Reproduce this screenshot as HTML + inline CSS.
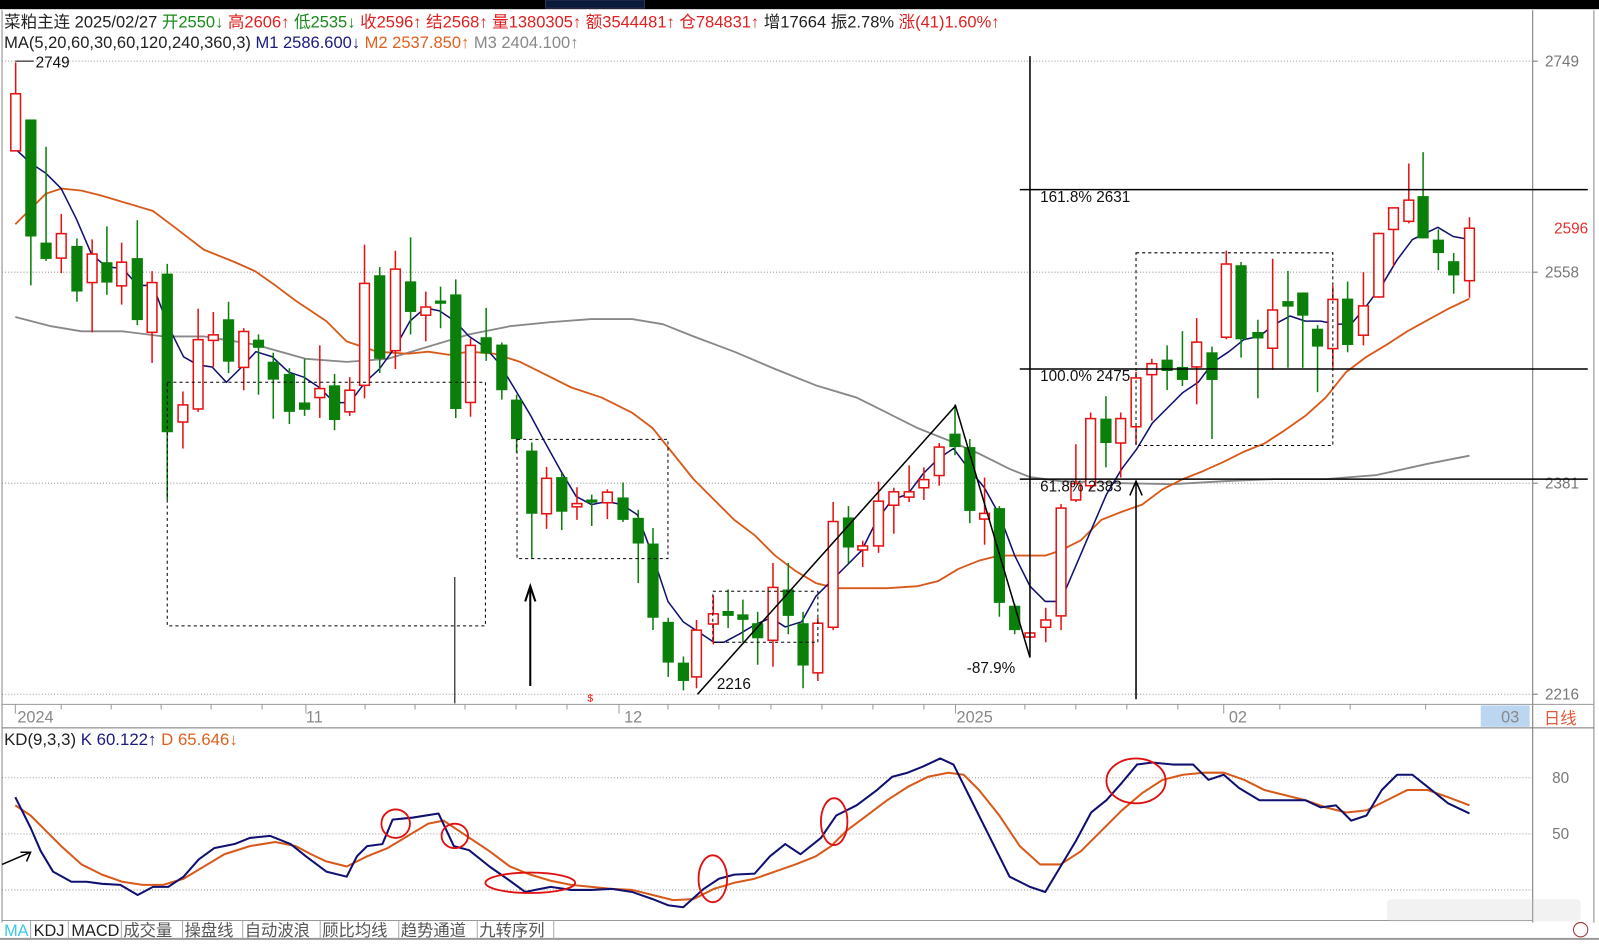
<!DOCTYPE html>
<html><head><meta charset="utf-8"><style>
html,body{margin:0;padding:0;background:#fff;width:1599px;height:946px;overflow:hidden}
svg{display:block}
text{font-family:"Liberation Sans","Noto Sans CJK SC",sans-serif}
</style></head><body>
<svg id="s" width="1599" height="946" viewBox="0 0 1568 928" preserveAspectRatio="none" xmlns="http://www.w3.org/2000/svg">
<rect x="0" y="0" width="1568" height="928" fill="#fff"/>
<rect x="0" y="0" width="1568" height="9" fill="#000"/>
<rect x="535" y="0" width="97" height="8" fill="#0a1a3a" stroke="#335" />
<line x1="2" y1="10" x2="2" y2="905" stroke="#888"/>
<line x1="1503" y1="10" x2="1503" y2="905" stroke="#777"/>
<line x1="1563" y1="10" x2="1563" y2="905" stroke="#888"/>
<line x1="2" y1="691" x2="1563" y2="691" stroke="#999"/>
<line x1="2" y1="714" x2="1563" y2="714" stroke="#777"/>
<line x1="2" y1="903" x2="1503" y2="903" stroke="#999"/>
<line x1="0" y1="921" x2="1568" y2="921" stroke="#999" stroke-width="2"/>
<g stroke="#999" stroke-dasharray="1,2">
<line x1="2" y1="60" x2="1503" y2="60"/><line x1="2" y1="267" x2="1503" y2="267"/>
<line x1="2" y1="474" x2="1503" y2="474"/><line x1="2" y1="681" x2="1503" y2="681"/>
<line x1="2" y1="763" x2="1503" y2="763"/><line x1="2" y1="818" x2="1503" y2="818"/>
<line x1="2" y1="873" x2="1503" y2="873"/>
</g>
<g stroke="#777"><line x1="1503" y1="60" x2="1508" y2="60"/><line x1="1503" y1="267" x2="1508" y2="267"/><line x1="1503" y1="474" x2="1508" y2="474"/><line x1="1503" y1="681" x2="1508" y2="681"/></g>
<g font-size="15" fill="#777">
<text x="1515" y="65">2749</text><text x="1515" y="272">2558</text><text x="1515" y="479">2381</text><text x="1515" y="686">2216</text>
<text x="1522" y="768">80</text><text x="1522" y="823">50</text>
</g>
<text x="1524" y="229" font-size="15" fill="#e03030">2596</text>
<g stroke="#999"><line x1="15" y1="691" x2="15" y2="700"/><line x1="60" y1="691" x2="60" y2="696"/><line x1="109" y1="691" x2="109" y2="696"/><line x1="158" y1="691" x2="158" y2="696"/><line x1="207" y1="691" x2="207" y2="696"/><line x1="257" y1="691" x2="257" y2="696"/><line x1="300" y1="691" x2="300" y2="700"/><line x1="358" y1="691" x2="358" y2="696"/><line x1="407" y1="691" x2="407" y2="696"/><line x1="456" y1="691" x2="456" y2="696"/><line x1="506" y1="691" x2="506" y2="696"/><line x1="556" y1="691" x2="556" y2="696"/><line x1="607" y1="691" x2="607" y2="700"/><line x1="655" y1="691" x2="655" y2="696"/><line x1="705" y1="691" x2="705" y2="696"/><line x1="756" y1="691" x2="756" y2="696"/><line x1="806" y1="691" x2="806" y2="696"/><line x1="856" y1="691" x2="856" y2="696"/><line x1="906" y1="691" x2="906" y2="696"/><line x1="937" y1="691" x2="937" y2="700"/><line x1="1005" y1="691" x2="1005" y2="696"/><line x1="1055" y1="691" x2="1055" y2="696"/><line x1="1105" y1="691" x2="1105" y2="696"/><line x1="1155" y1="691" x2="1155" y2="696"/><line x1="1200" y1="691" x2="1200" y2="700"/><line x1="1255" y1="691" x2="1255" y2="696"/><line x1="1324" y1="691" x2="1324" y2="696"/><line x1="1398" y1="691" x2="1398" y2="696"/></g>
<rect x="1452" y="692" width="48" height="21" fill="#bcd6f2"/>
<g font-size="16" fill="#888"><text x="17" y="709">2024</text><text x="300" y="709">11</text><text x="612" y="709">12</text><text x="938" y="709">2025</text><text x="1205" y="709">02</text><text x="1472" y="709">03</text></g>
<text x="1514" y="710" font-size="16" fill="#e05a3a">日线</text>

<g id="ma"></g>
<g id="candles"></g>

<g stroke="#000" fill="none">
<line x1="15" y1="60" x2="33" y2="60" stroke-width="1"/>
<line x1="1010" y1="55" x2="1010" y2="645" stroke-width="1.5"/>
<line x1="1000" y1="186" x2="1557" y2="186" stroke-width="1.5"/>
<line x1="1000" y1="362" x2="1557" y2="362" stroke-width="1.5"/>
<line x1="1000" y1="470" x2="1557" y2="470" stroke-width="1.5"/>
<line x1="1114" y1="472" x2="1114" y2="686" stroke-width="1.5"/>
<polyline points="1108,486 1114,472 1120,486" stroke-width="1.5"/>
<polyline points="684,681 937,398 1010,645" stroke-width="1.5"/>
<line x1="446" y1="566" x2="446" y2="690"/>
<line x1="520" y1="575" x2="520" y2="673" stroke-width="2"/>
<polyline points="515,590 520,575 525,590" stroke-width="2"/>
<g stroke-dasharray="3,3">
<rect x="164" y="375" width="312" height="239"/>
<rect x="507" y="431" width="148" height="117"/>
<rect x="699" y="580" width="103" height="50"/>
<rect x="1114" y="248" width="193" height="189"/>
</g>
<line x1="2" y1="848" x2="30" y2="836" stroke-width="1.5"/>
<polyline points="20,836 30,836 26,845" stroke-width="1.5"/>
</g>
<g font-size="15" fill="#111">
<text x="35" y="66">2749</text>
<text x="703" y="676">2216</text>
<text x="948" y="660">-87.9%</text>
<text x="1020" y="198">161.8% 2631</text>
<text x="1020" y="374">100.0% 2475</text>
<text x="1020" y="482">61.8% 2383</text>
</g>
<text x="576" y="688" font-size="10" fill="#e00">$</text>

<text x="4" y="27" fill="#222" font-size="16.2">菜粕主连 2025/02/27 <tspan fill="#1a8a1a">开2550↓</tspan> <tspan fill="#e02020">高2606↑</tspan> <tspan fill="#1a8a1a">低2535↓</tspan> <tspan fill="#e02020">收2596↑ 结2568↑ 量1380305↑ 额3544481↑ 仓784831↑</tspan> 增17664 振2.78% <tspan fill="#e02020">涨(41)1.60%↑</tspan></text>
<text x="4" y="47" fill="#222" font-size="16.2">MA(5,20,60,30,60,120,240,360,3)  <tspan fill="#1a1a80">M1 2586.600↓</tspan>  <tspan fill="#e06020">M2 2537.850↑</tspan>  <tspan fill="#888">M3 2404.100↑</tspan></text>
<text x="4" y="731" fill="#222" font-size="16.5">KD(9,3,3)  <tspan fill="#1a1a80">K 60.122↑</tspan>  <tspan fill="#e06020">D 65.646↓</tspan></text>
<g id="kd"></g>
<g stroke="#e01010" stroke-width="1.8" fill="none">
<ellipse cx="388" cy="808" rx="14" ry="14"/>
<ellipse cx="446" cy="820" rx="13" ry="12"/>
<ellipse cx="520" cy="866" rx="44" ry="10"/>
<ellipse cx="699" cy="862" rx="14" ry="23"/>
<ellipse cx="818" cy="806" rx="13" ry="23"/>
<ellipse cx="1114" cy="766" rx="29" ry="22"/>
</g>
<g font-size="16" fill="#222">
<text x="4" y="918" fill="#3cc8e8">MA</text>
<text x="33" y="918">KDJ</text><text x="70" y="918">MACD</text>
<text x="121" y="918" fill="#555">成交量</text><text x="181" y="918" fill="#555">操盘线</text><text x="240" y="918" fill="#555">自动波浪</text><text x="316" y="918" fill="#555">顾比均线</text><text x="393" y="918" fill="#555">趋势通道</text><text x="470" y="918" fill="#555">九转序列</text>
</g>
<g stroke="#aaa"><line x1="30" y1="903" x2="30" y2="921"/><line x1="67" y1="903" x2="67" y2="921"/><line x1="119" y1="903" x2="119" y2="921"/><line x1="179" y1="903" x2="179" y2="921"/><line x1="238" y1="903" x2="238" y2="921"/><line x1="314" y1="903" x2="314" y2="921"/><line x1="391" y1="903" x2="391" y2="921"/><line x1="468" y1="903" x2="468" y2="921"/><line x1="543" y1="903" x2="543" y2="921"/></g>
<g opacity="0.25" fill="#ccc"><rect x="1360" y="882" width="190" height="22" rx="4"/></g>
<circle cx="1550" cy="912" r="7" fill="none" stroke="#933"/>
</svg>
<script>
var NS="http://www.w3.org/2000/svg";
function el(p,t,a){var e=document.createElementNS(NS,t);for(var k in a)e.setAttribute(k,a[k]);p.appendChild(e);return e;}
var A=[[35,105,245,28,245,'r'],[69,168,455,168,575,'g'],[103,470,510,235,515,'g'],[137,448,508,400,545,'r'],[172,478,590,460,615,'g'],[206,498,568,462,690,'r'],[239,518,568,430,598,'g'],[272,518,576,470,622,'r'],[307,508,660,415,672,'g'],[340,568,690,540,765,'r'],[374,546,935,522,1100,'g'],[409,868,910,835,975,'r'],[443,708,878,632,885,'r'],[477,700,706,640,775,'r'],[511,658,762,615,790,'g'],[545,688,776,680,832,'r'],[578,708,728,695,843,'g'],[611,762,806,740,902,'g'],[647,792,885,778,915,'g'],[681,862,880,755,895,'g'],[715,828,850,722,900,'r'],[748,820,905,792,930,'g'],[782,832,885,800,895,'r'],[815,570,820,475,852,'r'],[849,550,755,530,790,'g'],[884,535,735,490,780,'r'],[918,565,640,457,695,'g'],[952,628,648,590,712,'r'],[985,612,620,578,680,'g'],[1019,597,878,560,900,'g'],[1052,722,862,705,897,'r'],[1087,702,742,630,760,'g'],[1122,720,832,715,855,'g'],[1155,855,952,843,985,'g'],[1189,980,1135,960,1245,'g'],[1222,1048,1135,1020,1172,'r'],[1256,1045,1130,1035,1175,'g'],[1290,1110,1118,1070,1150,'r'],[1323,1100,1108,1088,1165,'g'],[1358,1082,1108,1075,1148,'r'],[1393,1095,1150,1058,1155,'g'],[1427,1145,1208,1125,1305,'g'],[1460,1208,1390,1170,1420,'g'],[1494,1400,1500,1390,1535,'g'],[1528,1500,1545,1485,1568,'g']];
var B=[[32,1425,1540,1400,1568,'r'],[65,1385,1410,1340,1460,'r'],[94,1378,1390,1325,1420,'g'],[123,1390,1396,1350,1455,'g'],[152,1408,1445,1380,1510,'g'],[182,1320,1450,1260,1515,'r'],[212,1325,1390,1260,1435,'g'],[241,1408,1512,1380,1568,'g'],[270,1408,1530,1395,1550,'r'],[300,1158,1418,1110,1425,'r'],[330,1148,1222,1120,1260,'g'],[358,1218,1228,1205,1270,'r'],[389,1108,1218,1060,1235,'r'],[419,1085,1118,1075,1188,'r'],[449,1085,1098,1020,1110,'r'],[478,1055,1075,1025,1105,'r'],[508,975,1045,965,1070,'r'],[539,942,975,870,995,'g'],[568,975,1132,955,1162,'g'],[597,1138,1152,1050,1215,'r'],[626,1125,1358,1120,1392,'g'],[656,1365,1425,1360,1435,'g'],[686,1432,1442,1432,1442,'r'],[717,1400,1418,1370,1455,'r'],[747,1125,1390,1115,1425,'r'],[776,1065,1105,968,1110,'r'],[805,905,1070,890,1080,'r'],[835,905,965,850,1025,'g'],[864,905,965,890,1050,'r'],[894,805,925,790,970,'r'],[925,770,797,758,910,'r'],[955,760,788,725,835,'g'],[985,778,810,690,825,'g'],[1013,717,778,658,870,'r'],[1043,742,810,728,955,'g'],[1071,525,705,492,710,'r'],[1100,528,710,520,755,'g'],[1133,692,708,662,855,'g'],[1162,638,732,512,785,'r'],[1192,620,626,542,780,'g'],[1221,595,652,595,780,'g'],[1250,684,728,675,840,'g'],[1280,612,733,578,780,'r'],[1309,610,724,568,742,'g'],[1340,628,700,545,725,'r'],[1370,450,606,448,608,'r'],[1399,387,440,385,530,'r'],[1429,368,420,278,425,'r'],[1457,358,462,250,462,'g'],[1487,465,498,440,540,'g'],[1517,518,553,498,598,'g'],[1548,437,566,410,608,'r']];
var C=document.getElementById('candles');
function draw(x,bt,bb,wt,wb,c){var col=c=='r'?'#e81010':'#0a800a';var w=11;
 if(bb-bt<3){bt-=1.5;bb+=1.5;}
 el(C,'line',{x1:x,y1:wt,x2:x,y2:wb,stroke:col,'stroke-width':1.5});
 if(c=='r')el(C,'rect',{x:x-w/2+0.75,y:bt,width:w-1.5,height:bb-bt,fill:'#fff',stroke:col,'stroke-width':1.5});
 else el(C,'rect',{x:x-w/2,y:bt,width:w,height:bb-bt,fill:col});}
A.forEach(function(d){draw(d[0]/2.28,50+d[1]/2.5,50+d[2]/2.5,50+d[3]/2.5,50+d[4]/2.5,d[5]);});
B.forEach(function(d){var f=function(Y){return 49.5+Y/2.506};draw(667+d[0]/2,f(d[1]),f(d[2]),f(d[3]),f(d[4]),d[5]);});
var M=document.getElementById('ma');
function pl(p,pts,col,w){el(p,'polyline',{points:pts,fill:'none',stroke:col,'stroke-width':w,'stroke-linejoin':'round'});}
pl(M,"15,311 50,320 80,325 120,325 160,330 200,330 250,338 300,352 340,355 380,352 420,340 460,328 500,320 540,316 580,313 620,313 650,318 680,330 720,345 760,362 800,378 840,390 870,405 900,420 930,432 960,445 990,460 1010,468 1040,472 1100,474 1150,475 1200,472 1250,470 1300,470 1350,466 1400,455 1441,447","#888",1.8);
pl(M,"15,220 30,205 45,190 60,185 80,187 100,192 120,198 150,207 170,222 200,245 230,257 250,266 270,280 290,295 320,315 340,335 370,345 400,347 420,345 440,348 460,345 485,347 510,355 530,365 560,380 590,390 620,405 640,420 660,445 680,470 700,490 720,510 740,525 760,545 780,560 800,572 820,577 840,577 870,577 900,575 920,570 940,558 960,550 980,545 1000,545 1025,545 1040,540 1060,530 1080,510 1100,502 1120,495 1140,480 1160,470 1180,462 1200,453 1220,443 1240,435 1260,422 1280,408 1300,390 1320,365 1340,350 1360,338 1380,325 1400,314 1420,303 1441,293","#d85a1a",1.8);
pl(M,"16,147 30,160 45,170 60,185 75,215 90,250 105,262 120,263 135,280 150,280 165,320 180,350 194,358 208,360 222,375 237,360 251,345 267,350 283,365 298,370 313,380 328,395 343,395 358,375 372,362 388,340 402,315 417,302 431,305 446,315 460,330 475,340 490,357 505,382 520,407 535,435 550,462 565,487 580,495 595,492 610,495 625,505 640,545 655,590 670,610 685,620 700,630 710,630 725,622 740,613 756,606 770,615 786,610 800,585 815,570 830,555 845,540 860,510 875,490 890,485 905,465 920,450 935,440 950,460 965,478 980,505 995,545 1010,575 1025,590 1040,590 1055,555 1070,520 1085,485 1100,460 1115,440 1130,415 1145,400 1160,385 1175,375 1190,355 1205,345 1220,333 1235,330 1250,318 1265,310 1280,315 1295,315 1310,318 1325,318 1340,300 1355,280 1370,255 1385,235 1410,223 1425,232 1441,235","#101070",1.5);
var K=document.getElementById('kd');
pl(K,"15,790 30,800 45,815 60,830 80,848 100,858 120,865 140,868 160,868 180,862 200,850 220,838 245,830 270,826 290,830 305,838 320,845 340,850 360,840 380,832 400,820 420,808 435,805 450,815 465,825 480,835 500,850 520,858 540,864 560,868 580,870 600,872 620,873 640,878 660,883 680,882 700,872 720,866 740,862 760,855 780,848 800,840 815,830 830,815 850,800 870,785 890,772 910,762 930,758 945,760 960,775 980,800 1000,830 1020,848 1040,848 1060,835 1080,815 1100,795 1120,778 1140,765 1160,760 1180,758 1200,758 1220,765 1240,775 1260,780 1280,785 1300,792 1320,797 1340,795 1360,785 1380,775 1400,775 1420,782 1441,790","#d85a1a",2);
pl(K,"15,782 30,812 40,835 52,855 70,865 85,865 100,867 118,868 135,878 150,870 165,870 180,860 195,843 210,832 230,828 245,822 265,820 285,828 300,840 320,855 340,860 350,840 360,830 375,828 385,804 405,802 430,798 445,830 460,834 480,850 500,864 515,875 525,873 540,870 560,873 580,873 600,872 620,875 640,882 655,888 670,890 690,872 705,862 720,858 740,857 755,840 770,828 785,838 805,822 820,800 840,790 860,775 875,762 890,758 905,752 922,744 935,750 950,780 970,820 990,860 1010,870 1025,875 1040,850 1055,825 1070,797 1085,785 1100,768 1115,750 1130,748 1150,750 1170,750 1185,765 1200,760 1215,773 1235,785 1260,785 1280,785 1295,792 1310,790 1325,805 1340,800 1355,775 1370,760 1385,760 1400,772 1420,788 1441,798","#101070",2);
</script>
</body></html>
